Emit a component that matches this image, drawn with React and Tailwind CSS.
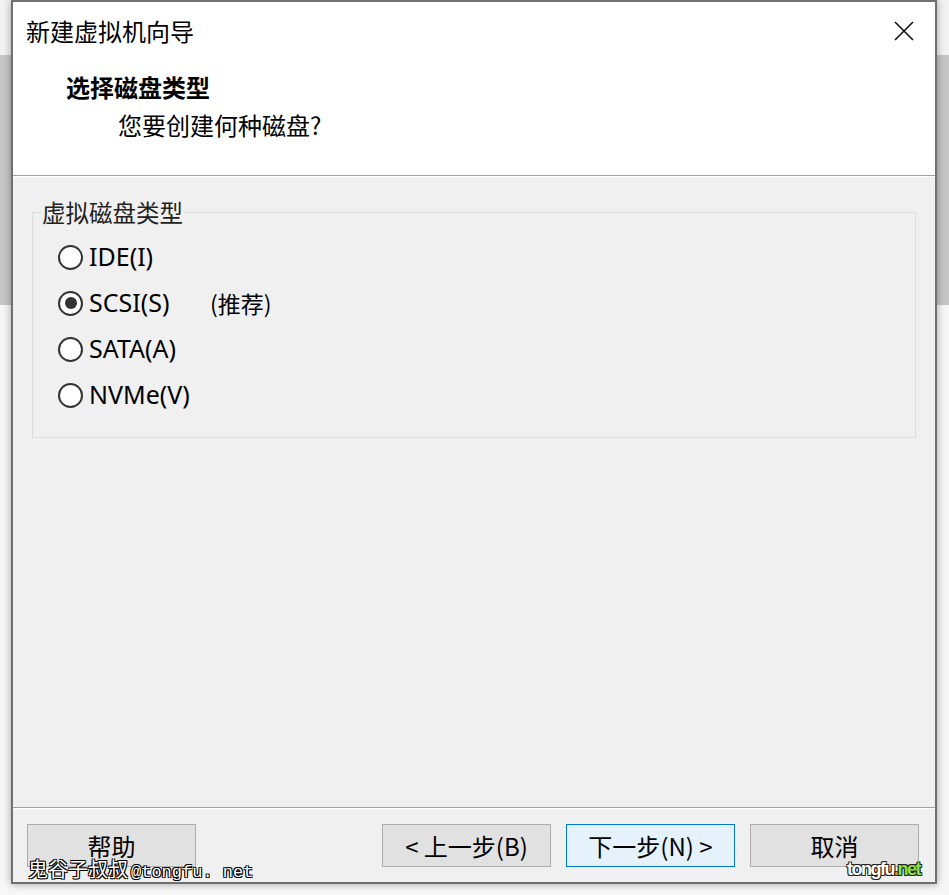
import React from 'react';

const CJK = { fontFamily: '"Noto Sans CJK SC", "Noto Sans", sans-serif' };
const UI = { fontFamily: '"Noto Sans", "Noto Sans CJK SC", sans-serif' };

const OPTIONS = [
  { label: 'IDE(I)', checked: false },
  { label: 'SCSI(S)', checked: true, note: '(推荐)' },
  { label: 'SATA(A)', checked: false },
  { label: 'NVMe(V)', checked: false },
];

function Radio({ checked }) {
  return (
    <span className="flex h-[25px] w-[25px] shrink-0 items-center justify-center rounded-full border-2 border-[#333333] bg-white">
      {checked && <span className="h-[12px] w-[12px] rounded-full bg-[#333333]" />}
    </span>
  );
}

function Button({ children, primary }) {
  return (
    <button
      className={`flex h-[43px] w-[169px] items-center justify-center border text-[24px] text-black ${
        primary ? 'border-[#0078d7] bg-[#e5f1fb]' : 'border-[#adadad] bg-[#e1e1e1]'
      }`}
      style={CJK}
    >
      {children}
    </button>
  );
}

export default function App() {
  return (
    <div className="relative h-[895px] w-[949px] overflow-hidden bg-[linear-gradient(to_bottom,#f3f3f3_0px,#f3f3f3_55px,#c6c6c6_55px,#c6c6c6_305px,#f7f7f7_305px)]">
      <div className="ml-[11px] flex h-[884px] w-[926px] flex-col border-2 border-[#707070] bg-[#f0f0f0] shadow-[0_0_8px_rgba(0,0,0,0.35)]">
        {/* title bar */}
        <div className="flex h-[57px] items-center justify-between bg-white pl-[13px] pr-[21px]">
          <span className="text-[24px] text-black" style={CJK}>新建虚拟机向导</span>
          <svg width="20" height="20" viewBox="0 0 20 20">
            <path d="M1 1 L19 19 M19 1 L1 19" stroke="#111" strokeWidth="1.6" fill="none" />
          </svg>
        </div>

        {/* header */}
        <div className="h-[117px] border-b border-[#a0a0a0] bg-white pt-[13px]" style={CJK}>
          <div className="pl-[53px] text-[24px] font-bold leading-[29px] text-black">选择磁盘类型</div>
          <div className="mt-[9px] pl-[105px] text-[24px] leading-[29px] text-black">您要创建何种磁盘?</div>
        </div>
        <div className="h-px bg-white" />

        {/* body */}
        <div className="flex-1 px-[19px] pt-[21px]">
          <fieldset className="h-[240px] border border-[#dcdcdc]">
            <legend className="ml-[8px] px-[1px] text-[23.5px] leading-[28px] text-[#222]" style={CJK}>
              虚拟磁盘类型
            </legend>
            <div className="pl-[25px] pt-[8px]">
              {OPTIONS.map(opt => (
                <div key={opt.label} className="flex h-[46px] items-center">
                  <Radio checked={opt.checked} />
                  <span
                    className={`ml-[6px] text-[25px] text-black ${opt.note ? 'w-[121px]' : ''}`}
                    style={UI}
                  >
                    {opt.label}
                  </span>
                  {opt.note && (
                    <span className="text-[23px] text-black" style={CJK}>{opt.note}</span>
                  )}
                </div>
              ))}
            </div>
          </fieldset>
        </div>

        {/* footer */}
        <div className="h-px bg-[#a0a0a0]" />
        <div className="h-px bg-white" />
        <div className="flex h-[73px] items-center pl-[14px] pr-[16px]">
          <Button>帮助</Button>
          <div className="flex-1" />
          <div className="flex gap-[15px]">
            <Button>&lt; 上一步(B)</Button>
            <Button primary>下一步(N) &gt;</Button>
            <Button>取消</Button>
          </div>
        </div>
      </div>

      {/* watermarks */}
      <div
        className="absolute left-[28px] top-[856px] text-[20px] leading-[26px] text-white [text-shadow:-1px_-1px_0_#000,1px_-1px_0_#000,-1px_1px_0_#000,1px_1px_0_#000]"
        style={CJK}
      >
        鬼谷子叔叔<span style={{ fontFamily: '"Liberation Mono", monospace' }} className="ml-[3px] text-[17px]">@tongfu. net</span>
      </div>
      <div
        className="absolute left-[847px] top-[857px] text-[18px] font-bold leading-[24px] tracking-[-1.5px] [text-shadow:-1px_-1px_0_#222,1px_-1px_0_#222,-1px_1px_0_#222,1px_1px_0_#222]"
        style={{ fontFamily: '"Liberation Sans", sans-serif' }}
      >
        <span className="text-white">tongfu</span>
        <span className="text-[#f0a020]">.</span>
        <span className="text-[#8ee03a]">net</span>
      </div>
    </div>
  );
}
